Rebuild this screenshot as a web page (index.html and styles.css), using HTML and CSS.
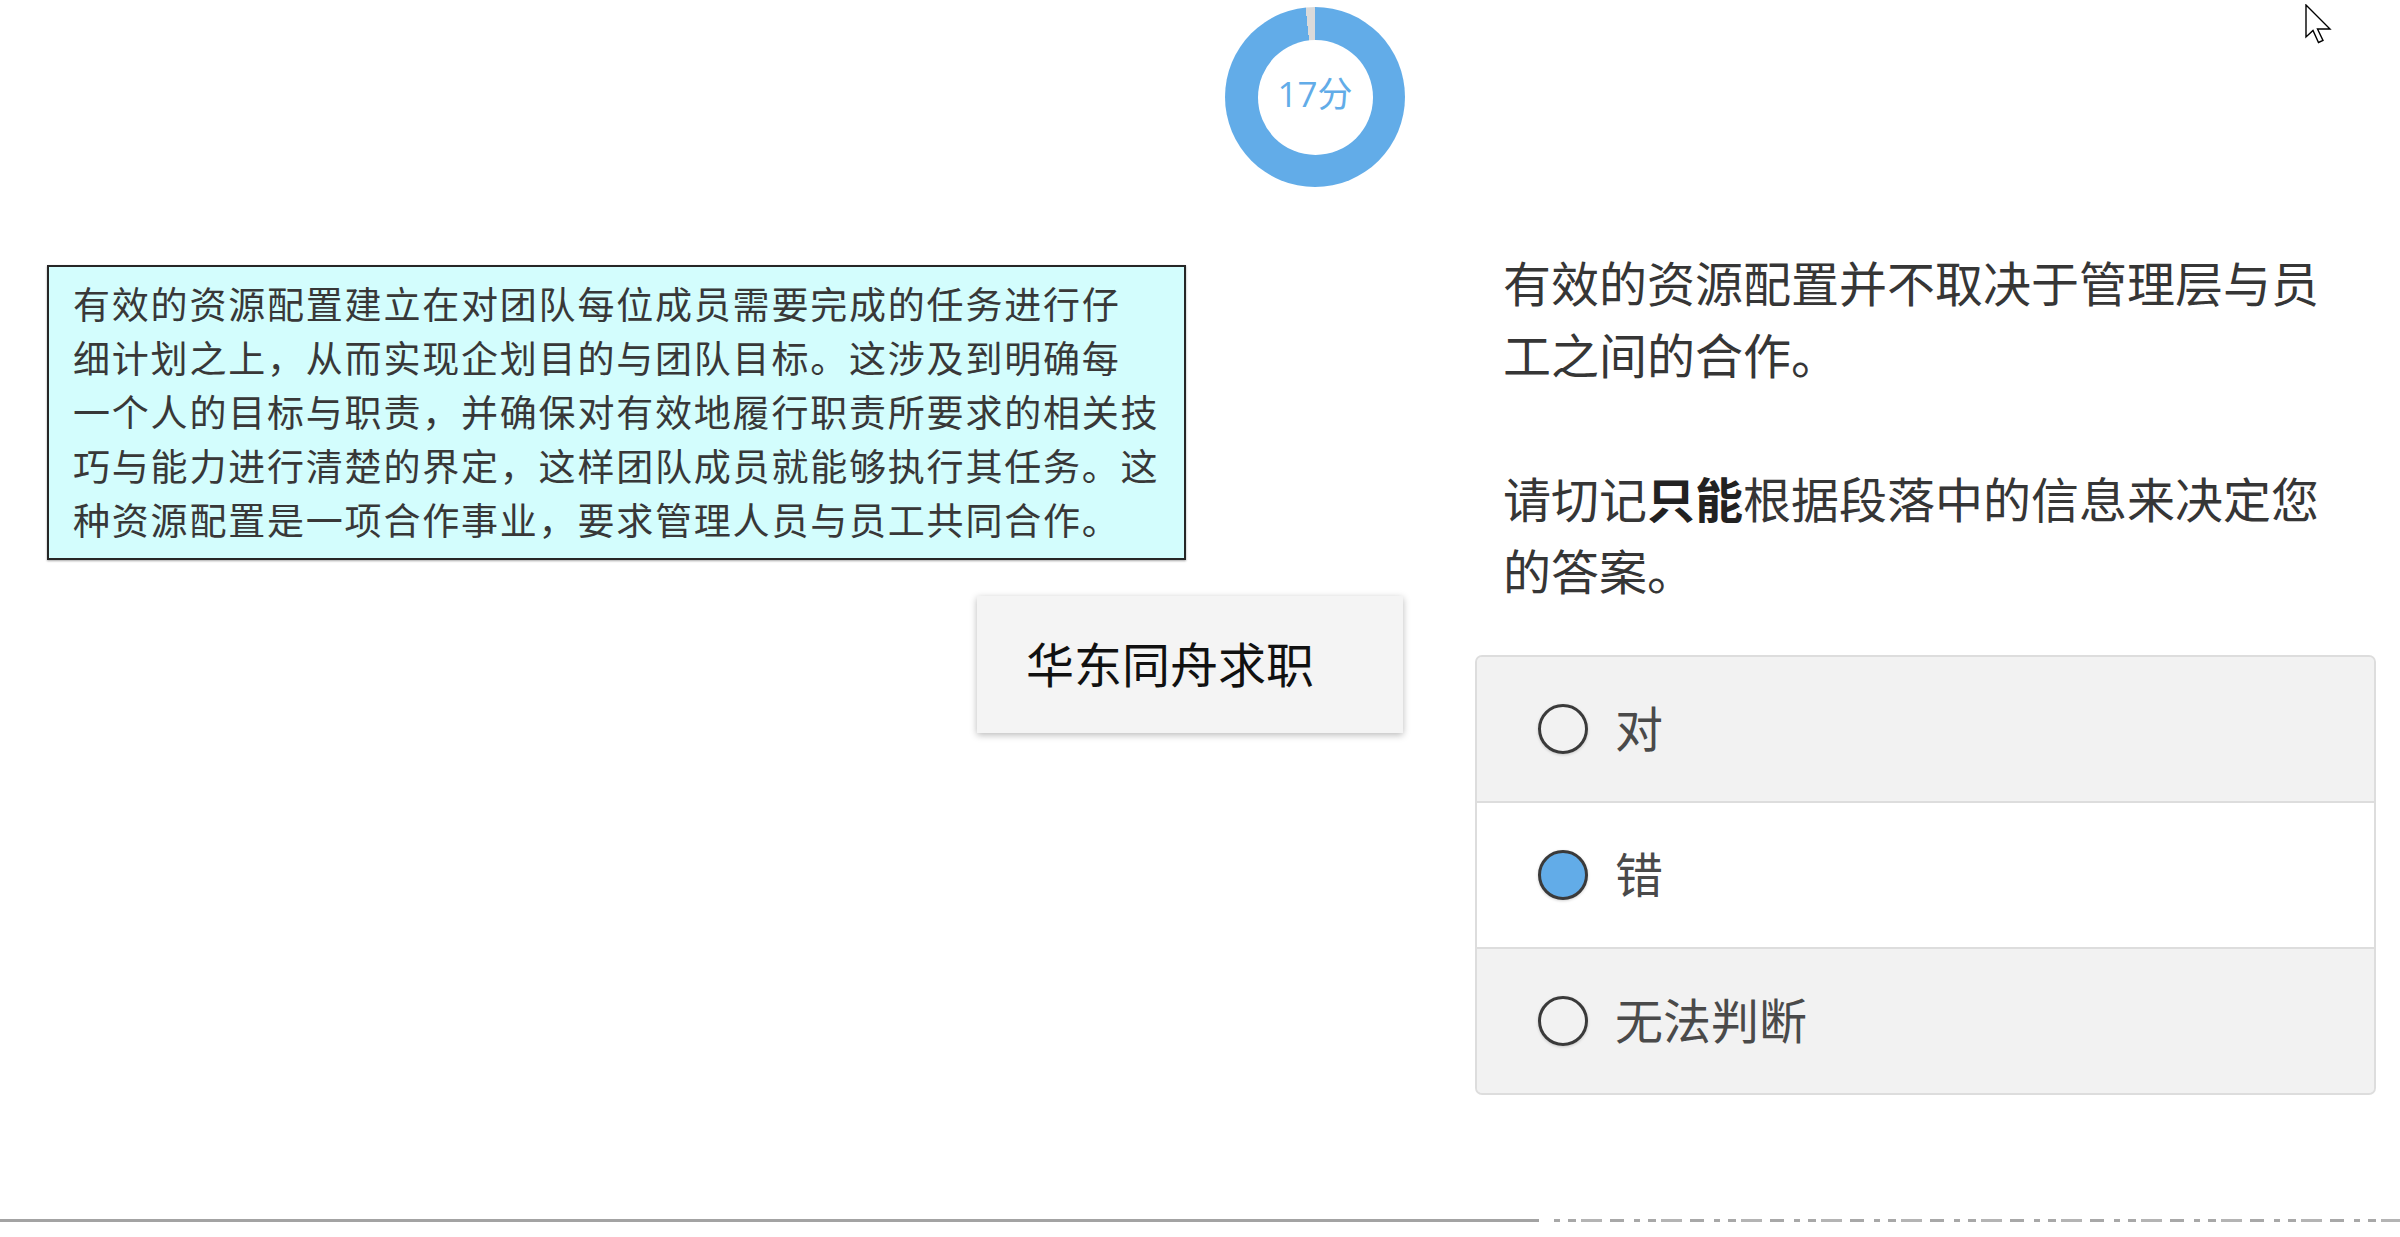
FILE: index.html
```html
<!DOCTYPE html>
<html lang="zh-CN">
<head>
<meta charset="utf-8">
<title>言语理解</title>
<link rel="stylesheet" href="styles.css">
</head>
<body>
<div class="page">
  <header class="score-bar">
    <div class="donut">
      <div class="donut-hole"><span class="score">17分</span></div>
    </div>
  </header>

  <main class="content">
    <section class="left">
      <div class="passage">
        <div class="pline">有效的资源配置建立在对团队每位成员需要完成的任务进行仔</div>
        <div class="pline">细计划之上，从而实现企划目的与团队目标。这涉及到明确每</div>
        <div class="pline">一个人的目标与职责，并确保对有效地履行职责所要求的相关技</div>
        <div class="pline">巧与能力进行清楚的界定，这样团队成员就能够执行其任务。这</div>
        <div class="pline">种资源配置是一项合作事业，要求管理人员与员工共同合作。</div>
      </div>
      <div class="brand">华东同舟求职</div>
    </section>

    <section class="right">
      <p class="question">有效的资源配置并不取决于管理层与员工之间的合作。</p>
      <p class="note"><span>请切记</span><b class="em">只能</b><span>根据段落中的信息来决定您</span><span>的答案。</span></p>
      <div class="options">
        <div class="option"><span class="radio"></span><span class="label">对</span></div>
        <div class="option option-active"><span class="radio radio-checked"></span><span class="label">错</span></div>
        <div class="option"><span class="radio"></span><span class="label">无法判断</span></div>
      </div>
    </section>
  </main>

  <footer class="rule">
    <div class="rule-solid"></div>
    <div class="rule-frag"></div>
  </footer>

  <svg class="cursor" width="28" height="42" viewBox="0 0 28 42" xmlns="http://www.w3.org/2000/svg">
    <path d="M1 1 L1 33 L8 26.5 L13.5 38.5 L18 36.5 L12.5 25 L25 25 Z" fill="#fff" stroke="#000" stroke-width="1.4" stroke-linejoin="miter"/>
  </svg>
</div>
</body>
</html>
```

FILE: styles.css
```css
html, body {
  margin: 0;
  padding: 0;
  background: #ffffff;
}

body {
  font-family: "Noto Sans CJK SC", "Noto Sans", sans-serif;
  color: #333333;
}

.page {
  position: relative;
  width: 2400px;
  height: 1237px;
  overflow: hidden;
}

/* ---------- score donut ---------- */
.score-bar {
  height: 200px;
  padding-top: 7px;
  padding-left: 1225px;
  box-sizing: border-box;
}

.donut {
  width: 180px;
  height: 180px;
  border-radius: 50%;
  background: conic-gradient(#62ace8 0deg 354deg, #dadada 354deg 360deg);
  display: flex;
  align-items: center;
  justify-content: center;
}

.donut-hole {
  width: 115px;
  height: 115px;
  border-radius: 50%;
  background: #ffffff;
  display: flex;
  align-items: center;
  justify-content: center;
}

.score {
  font-family: "Open Sans", "Noto Sans CJK SC", sans-serif;
  font-size: 35px;
  color: #62ace8;
  line-height: 1;
  margin-top: -8px;
}

/* ---------- main ---------- */
.content {
  display: flex;
  height: 896px;
}

.left {
  width: 1475px;
  flex: none;
  padding-top: 65px;
  box-sizing: border-box;
}

.passage {
  margin-left: 47px;
  width: 1139px;
  height: 295px;
  box-sizing: border-box;
  background: #d3fdfd;
  border: 2px solid #262626;
  box-shadow: 0 1px 2px rgba(0, 0, 0, 0.35);
  padding: 9px 0 0 24px;
}

.pline {
  white-space: nowrap;
  font-size: 37px;
  letter-spacing: 1.8px;
  line-height: 54px;
  height: 54px;
  color: #383838;
  font-weight: 400;
}

.brand {
  margin-top: 36px;
  margin-left: 977px;
  width: 426px;
  height: 137px;
  box-sizing: border-box;
  background: #f4f4f4;
  box-shadow: 0 2px 7px rgba(0, 0, 0, 0.28);
  display: flex;
  align-items: center;
  padding-left: 49px;
  padding-bottom: 6px;
  font-size: 48px;
  color: #111111;
}

.right {
  width: 901px;
  flex: none;
  padding-top: 45px;
  box-sizing: border-box;
}

.question,
.note {
  margin: 0;
  padding-left: 28px;
  width: 868px;
  box-sizing: border-box;
  font-size: 48px;
  line-height: 72px;
  color: #363636;
}

.question {
  margin-bottom: 72px;
}

.em {
  font-weight: 700;
  color: #222222;
}

.options {
  margin-top: 50px;
  border: 2px solid #dddddd;
  border-radius: 7px;
  overflow: hidden;
  background: #f2f2f2;
}

.option {
  height: 144px;
  display: flex;
  align-items: center;
  padding-left: 61px;
  background: #f2f2f2;
}

.option + .option {
  border-top: 2px solid #dddddd;
}

.option-active {
  background: #ffffff;
}

.radio {
  width: 50px;
  height: 50px;
  box-sizing: border-box;
  border: 3px solid #3a3a3a;
  border-radius: 50%;
  background: transparent;
  box-shadow: 0 1px 3px rgba(0, 0, 0, 0.18);
  flex: none;
}

.radio-checked {
  background: #62ace8;
}

.label {
  margin-left: 27px;
  font-size: 48px;
  line-height: 1;
  padding-bottom: 6px;
  color: #4a4a4a;
}

/* ---------- bottom rule ---------- */
.rule {
  display: flex;
  align-items: center;
  padding-top: 123px;
  gap: 15px;
}

.rule-solid {
  width: 1539px;
  height: 3px;
  background: #a3a3a3;
  flex: none;
}

.rule-frag {
  flex: 1;
  height: 3px;
  background: repeating-linear-gradient(90deg,
    #a8a8a8 0 6px, transparent 6px 14px,
    #a8a8a8 14px 22px, transparent 22px 27px,
    #b4b4b4 27px 48px, transparent 48px 56px,
    #a8a8a8 56px 70px, transparent 70px 80px);
}

/* ---------- mouse pointer overlay ---------- */
.cursor {
  position: absolute;
  left: 2305px;
  top: 4px;
}
```
